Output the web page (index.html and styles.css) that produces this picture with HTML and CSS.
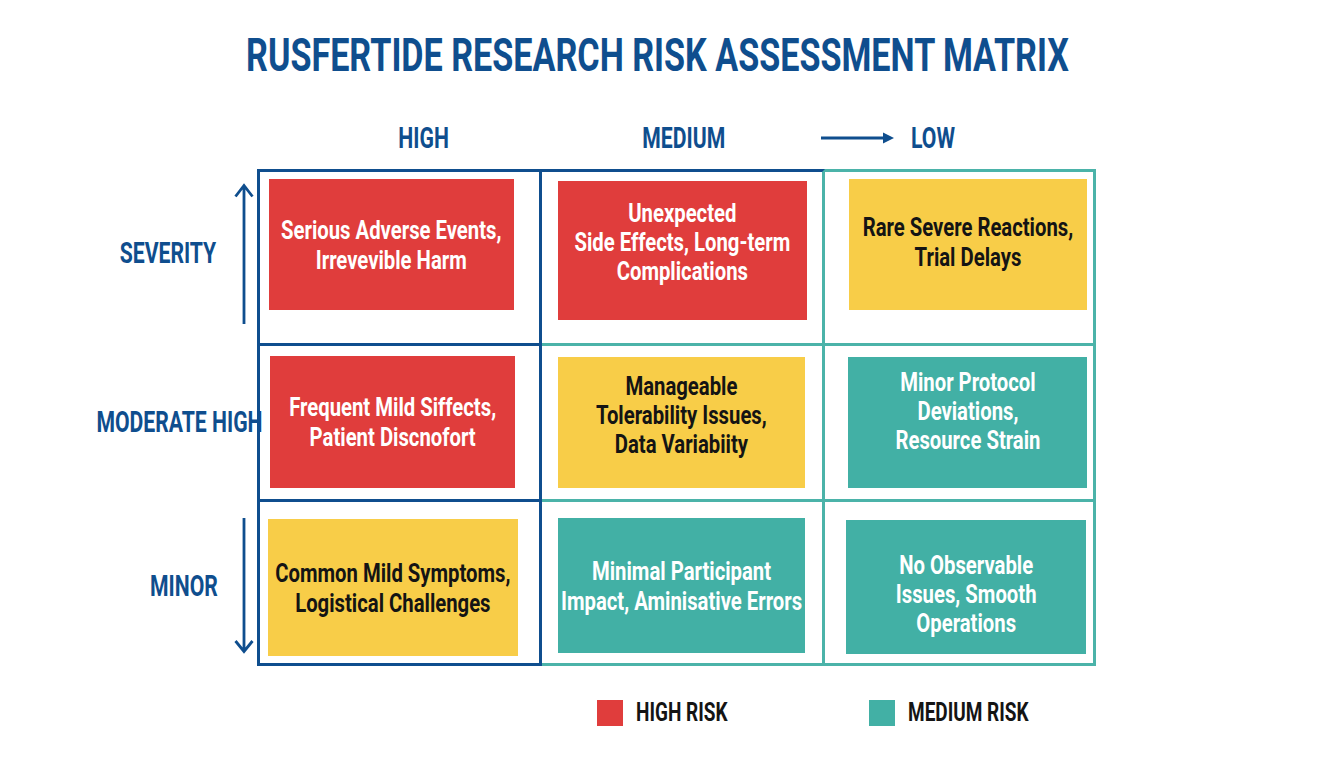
FILE: index.html
```html
<!DOCTYPE html>
<html lang="en">
<head>
<meta charset="utf-8">
<title>Rusfertide Research Risk Assessment Matrix</title>
<link rel="stylesheet" href="styles.css">
</head>
<body>
<main class="page">
  <h1 class="title"><span class="title-text">RUSFERTIDE RESEARCH RISK ASSESSMENT MATRIX</span></h1>

  <section class="matrix">
    <div class="corner"></div>
    <div class="colhead ch-high"><span class="axis">HIGH</span></div>
    <div class="colhead ch-med"><span class="axis">MEDIUM</span></div>
    <div class="colhead ch-low">
      <svg class="harrow" width="74" height="14" viewBox="0 0 74 14"><path d="M0 7H66" stroke="#0f4e8e" stroke-width="3"/><path d="M62 1.5L73 7L62 12.5Z" fill="#0f4e8e"/></svg>
      <span class="axis axis-left">LOW</span>
    </div>

    <div class="rowhead rh1">
      <span class="axis axis-right">SEVERITY</span>
      <svg class="varrow" width="20" height="141" viewBox="0 0 20 141"><path d="M10 2V141M1.5 13.5L10 2.5L18.5 13.5" fill="none" stroke="#0f4e8e" stroke-width="2.8"/></svg>
    </div>
    <div class="cell c1 r1"><div class="box red b11"><p class="txt">Serious Adverse Events,<br>Irrevevible Harm</p></div></div>
    <div class="cell c2 r1"><div class="box red b21"><p class="txt l3">Unexpected<br>Side Effects, Long-term<br>Complications</p></div></div>
    <div class="cell c3 r1"><div class="box yellow b31"><p class="txt">Rare Severe Reactions,<br>Trial Delays</p></div></div>

    <div class="rowhead rh2">
      <span class="axis axis-right mod">MODERATE HIGH</span>
    </div>
    <div class="cell c1 r2"><div class="box red b12"><p class="txt">Frequent Mild Siffects,<br>Patient Discnofort</p></div></div>
    <div class="cell c2 r2"><div class="box yellow b22"><p class="txt l3">Manageable<br>Tolerability Issues,<br>Data Variabiity</p></div></div>
    <div class="cell c3 r2"><div class="box teal b32"><p class="txt l3">Minor Protocol<br>Deviations,<br>Resource Strain</p></div></div>

    <div class="rowhead rh3">
      <span class="axis axis-right">MINOR</span>
      <svg class="varrow down" width="20" height="136" viewBox="0 0 20 136"><path d="M10 0V134M1.5 123L10 133.5L18.5 123" fill="none" stroke="#0f4e8e" stroke-width="2.8"/></svg>
    </div>
    <div class="cell c1 r3"><div class="box yellow b13"><p class="txt">Common Mild Symptoms,<br>Logistical Challenges</p></div></div>
    <div class="cell c2 r3"><div class="box teal b23"><p class="txt">Minimal Participant<br>Impact, Aminisative Errors</p></div></div>
    <div class="cell c3 r3"><div class="box teal b33"><p class="txt l3">No Observable<br>Issues, Smooth<br>Operations</p></div></div>
  </section>

  <footer class="legend">
    <div class="legend-item first"><span class="swatch red"></span><span class="legend-label">HIGH RISK</span></div>
    <div class="legend-item"><span class="swatch teal"></span><span class="legend-label">MEDIUM RISK</span></div>
  </footer>
</main>
</body>
</html>
```

FILE: styles.css
```css
* { box-sizing: border-box; }

html, body {
  margin: 0;
  padding: 0;
  background: #ffffff;
}

body {
  font-family: Roboto, "Noto Sans", "DejaVu Sans", sans-serif;
  color: #161616;
  width: 1344px;
  height: 768px;
  overflow: hidden;
}

.page {
  padding-top: 27px;
}

.title {
  margin: 0 0 38px 0;
  padding-right: 30px;
  display: flex;
  justify-content: center;
  font-size: 46px;
  line-height: 56px;
  font-weight: 700;
  color: #0f4e8e;
}

.title-text {
  flex-shrink: 0;
  white-space: nowrap;
  transform: scaleX(0.742);
}

/* ---------- matrix ---------- */
.matrix {
  display: grid;
  grid-template-columns: 257px 285px 283px 271px;
  grid-template-rows: 48px 177px 156px 164px;
}

.axis {
  display: inline-block;
  flex-shrink: 0;
  white-space: nowrap;
  font-size: 29px;
  line-height: 34px;
  font-weight: 700;
  color: #0f4e8e;
  transform: scaleX(0.73);
}

.axis-left { transform-origin: left center; }
.axis-right { transform-origin: right center; }

.colhead {
  display: flex;
  align-items: flex-start;
  justify-content: center;
}

.ch-high { padding-left: 49px; }

.ch-low {
  justify-content: flex-start;
  align-items: center;
  height: 34px;
  margin-left: -4px;
  gap: 16px;
}

.harrow { flex-shrink: 0; }

.rowhead {
  display: flex;
  align-items: center;
  justify-content: flex-end;
  padding-right: 3px;
  position: relative;
  z-index: 1;
}

.rh1 { padding-bottom: 9px; gap: 18px; }
.rh2 { padding-bottom: 4px; padding-right: 0; margin-right: -6px; }
.rh3 { padding-top: 4px; gap: 16px; }

.varrow { flex-shrink: 0; }

/* cells and their lines */
.cell {
  border-right: 3px solid #4bb3a9;
  border-bottom: 3px solid #4bb3a9;
}

.r1 { border-top: 3px solid #4bb3a9; }
.c1 {
  border-left: 3px solid #0f4e8e;
  border-right-color: #0f4e8e;
  border-bottom-color: #0f4e8e;
}
.c1.r1, .c2.r1 { border-top-color: #0f4e8e; }

/* coloured boxes */
.box {
  display: flex;
  align-items: center;
  justify-content: center;
}

.red { background: #e03d3c; color: #ffffff; }
.yellow { background: #f8cd48; color: #141414; }
.teal { background: #42b0a5; color: #ffffff; }

.b11 { margin: 7px 0 0 9px; width: 245px; height: 131px; }
.b21 { margin: 9px 0 0 16px; width: 249px; height: 139px; padding-bottom: 17px; }
.b31 { margin: 7px 0 0 24px; width: 238px; height: 131px; padding-bottom: 6px; }
.b12 { margin: 10px 0 0 10px; width: 245px; height: 132px; }
.b22 { margin: 11px 0 0 16px; width: 247px; height: 131px; padding-bottom: 15px; }
.b32 { margin: 11px 0 0 23px; width: 239px; height: 131px; padding-bottom: 23px; }
.b13 { margin: 17px 0 0 8px; width: 250px; height: 137px; }
.b23 { margin: 16px 0 0 16px; width: 247px; height: 135px; }
.b33 { margin: 18px 0 0 21px; width: 240px; height: 134px; padding-top: 15px; }

.txt {
  margin: 0;
  flex-shrink: 0;
  white-space: nowrap;
  text-align: center;
  font-size: 26px;
  line-height: 30px;
  font-weight: 700;
  transform: scaleX(0.78);
}

.txt.l3 { line-height: 29px; }

/* ---------- legend ---------- */
.legend {
  display: flex;
  align-items: center;
  margin: 34px 0 0 597px;
}

.legend-item {
  display: flex;
  align-items: center;
  gap: 13px;
}

.legend-item.first { width: 272px; }

.swatch {
  display: block;
  width: 26px;
  height: 26px;
  flex-shrink: 0;
}

.legend-label {
  display: inline-block;
  white-space: nowrap;
  font-size: 25px;
  line-height: 26px;
  font-weight: 700;
  color: #141414;
  transform: scaleX(0.76);
  transform-origin: left center;
}
```
